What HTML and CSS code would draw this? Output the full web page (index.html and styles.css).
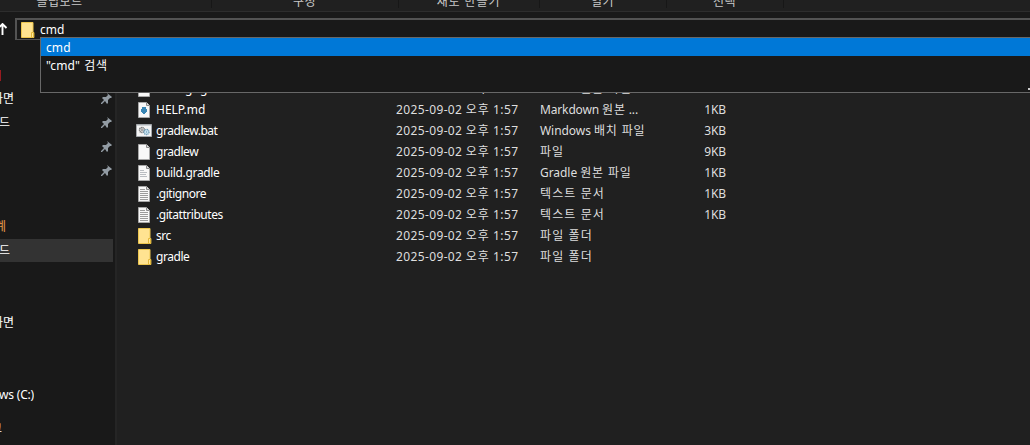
FILE: index.html
```html
<!DOCTYPE html>
<html lang="ko">
<head>
<meta charset="utf-8">
<title>Explorer</title>
<link rel="stylesheet" href="styles.css">
</head>
<body>
<svg class="defs" width="0" height="0">
  <symbol id="folder" viewBox="0 0 14 16"><path d="M.5.5h11.500v10h.9v5H.5z" fill="#ffe391" stroke="#edc64f"/><path d="M10.500 10.500h2v5h-2z" fill="#ffe79a" stroke="#e3b83a"/></symbol>
  <symbol id="pin" viewBox="0 0 11 12"><path d="M6 0l5 4-1 1-1 0-2 2 0 3-1 1-2-3-3 3-1 0 0-1 3-3-2-2 1-1h3l2-2z" fill="#929ba3"/></symbol>
  <symbol id="page" viewBox="0 0 12 16"><path d="M.5.5h8l3 3v12H.5z" fill="#f8f8f8" stroke="#a8a8a8"/><path d="M8.5.5v3h3" fill="#ddd" stroke="#8a8a8a"/></symbol>
  <symbol id="text" viewBox="0 0 12 16"><use href="#page" width="12" height="16"/><path d="M2 3.5h5M2 5.5h8M2 7.5h8M2 9.5h8M2 11.5h8M2 13.5h8" stroke="#9b9b9b"/></symbol>
  <symbol id="source" viewBox="0 0 12 16"><use href="#page" width="12" height="16"/><path d="M2 5.5h4M2 7.5h7M2 9.5h6M2 11.5h7" stroke="#b9bdc2"/></symbol>
  <symbol id="markdown" viewBox="0 0 12 16"><use href="#page" width="12" height="16"/><path d="M4 5h4v2h1v3H8v1H7v1H5v-1H4v-1H3V7h1z" fill="#3a87b5"/></symbol>
  <symbol id="batch" viewBox="0 0 16 13"><path d="M.5.5h15v12H.5z" fill="#f5f5f5" stroke="#a5a9ad"/><path d="M1 1.5h14" stroke="#cfd3d6"/><circle cx="6" cy="6" r="2.5" fill="#ddd" stroke="#777" stroke-width="1.4" stroke-dasharray="1.2 .5"/><circle cx="6" cy="6" r=".8" fill="#666"/><circle cx="10.5" cy="8" r="2.5" fill="#d4ebf6" stroke="#6f9db8" stroke-width="1.4" stroke-dasharray="1.2 .5"/><circle cx="10.5" cy="8" r=".8" fill="#6f9db8"/></symbol>
</svg>
<div class="window">
  <header class="ribbon">
    <div class="group first">클립보드</div><div class="group organize">구성</div><div class="group create">새로 만들기</div><div class="group open">열기</div><div class="group select">선택</div>
  </header>
  <div class="navbar">
    <svg class="up" width="8" height="13" viewBox="0 0 8 13"><path d="M2.500 12V1M-1.500 5l4-4 4 4" fill="none" stroke="#fff" stroke-width="1.9"/></svg>
    <div class="address"><div class="address-inner"><svg width="14" height="16"><use href="#folder"/></svg><span class="typed">cmd</span></div></div>
    <div class="suggestions">
      <div class="option active">cmd</div>
      <div class="option">"cmd" <span class="ko">검색</span></div>
      <i class="grip"></i>
    </div>
  </div>
  <div class="content">
    <nav class="sidebar">
      <div class="side-row access"><i class="red-mark"></i></div>
      <div class="side-row"><span class="label w14">바탕 화면</span><svg class="pin" width="11" height="12"><use href="#pin"/></svg></div>
      <div class="side-row"><span class="label w10">다운로드</span><svg class="pin" width="11" height="12"><use href="#pin"/></svg></div>
      <div class="side-row"><svg class="pin" width="11" height="12"><use href="#pin"/></svg></div>
      <div class="side-row"><svg class="pin" width="11" height="12"><use href="#pin"/></svg></div>
      <div class="side-row gap-a"><span class="label w6 orange">한계</span></div>
      <div class="side-row chosen"><span class="label w10">다운로드</span></div>
      <div class="side-row gap-b"><span class="label w14">바탕 화면</span></div>
      <div class="side-row gap-c"><span class="label w35">Windows (C:)</span></div>
      <div class="side-row gap-d"><span class="label w3">네트워크</span></div>
    </nav>
    <main class="files">
      <div class="file"><svg class="icon" width="12" height="16"><use href="#source"/></svg><span class="name">settings.gradle</span><span class="date">2025-09-02 <span class="ko">오후</span> 1:57</span><span class="type">Gradle <span class="ko">원본 파일</span></span><span class="size">1KB</span></div>
      <div class="file"><svg class="icon" width="12" height="16"><use href="#markdown"/></svg><span class="name help">HELP.md</span><span class="date">2025-09-02 <span class="ko">오후</span> 1:57</span><span class="type md">Markdown <span class="ko">원본</span> ...</span><span class="size">1KB</span></div>
      <div class="file"><svg class="icon wide" width="16" height="13"><use href="#batch"/></svg><span class="name">gradlew.bat</span><span class="date">2025-09-02 <span class="ko">오후</span> 1:57</span><span class="type">Windows <span class="ko">배치 파일</span></span><span class="size">3KB</span></div>
      <div class="file"><svg class="icon" width="12" height="16"><use href="#page"/></svg><span class="name">gradlew</span><span class="date">2025-09-02 <span class="ko">오후</span> 1:57</span><span class="type"><span class="ko">파일</span></span><span class="size">9KB</span></div>
      <div class="file"><svg class="icon" width="12" height="16"><use href="#source"/></svg><span class="name build">build.gradle</span><span class="date">2025-09-02 <span class="ko">오후</span> 1:57</span><span class="type">Gradle <span class="ko">원본 파일</span></span><span class="size">1KB</span></div>
      <div class="file"><svg class="icon" width="12" height="16"><use href="#text"/></svg><span class="name">.gitignore</span><span class="date">2025-09-02 <span class="ko">오후</span> 1:57</span><span class="type"><span class="ko doc">텍스트 문서</span></span><span class="size">1KB</span></div>
      <div class="file"><svg class="icon" width="12" height="16"><use href="#text"/></svg><span class="name">.gitattributes</span><span class="date">2025-09-02 <span class="ko">오후</span> 1:57</span><span class="type"><span class="ko doc">텍스트 문서</span></span><span class="size">1KB</span></div>
      <div class="file"><svg class="icon" width="14" height="16"><use href="#folder"/></svg><span class="name">src</span><span class="date">2025-09-02 <span class="ko">오후</span> 1:57</span><span class="type"><span class="ko doc">파일 폴더</span></span></div>
      <div class="file"><svg class="icon" width="14" height="16"><use href="#folder"/></svg><span class="name">gradle</span><span class="date">2025-09-02 <span class="ko">오후</span> 1:57</span><span class="type"><span class="ko doc">파일 폴더</span></span></div>
    </main>
  </div>
</div>
</body>
</html>
```
FILE: styles.css
```css
* { box-sizing: border-box; }
body { margin: 0; overflow: hidden; background: #202020; color: #fff; font: 12px/18px "Noto Sans", "Noto Sans CJK KR", sans-serif; }
.defs { position: absolute; }
.window { width: 1030px; height: 445px; overflow: hidden; display: flex; flex-direction: column; }
.ribbon { height: 12px; flex: none; display: flex; align-items: flex-end; background: #202020; border-bottom: 1px solid #2d2d2d; overflow: hidden; color: #c8c8c8; }
.group { height: 20px; flex: none; margin-bottom: 3px; border-right: 1px solid #171717; text-align: center; line-height: 27px; letter-spacing: .5px; padding-right: 1px; }
.first { width: 303px; margin-left: -91px; }
.organize { width: 187px; }
.create { width: 141px; letter-spacing: .9px; }
.open { width: 127px; }
.select { width: 117px; }
.navbar { position: relative; height: 28px; flex: none; display: flex; background: #191919; z-index: 2; }
.up { margin: 11px 7px 0 0; flex: none; }
.address { flex: 1; margin: 6px -3px 0 0; height: 22px; border: 1px solid #535353; }
.address-inner { height: 20px; border: 1px solid #535353; border-bottom: 0; display: flex; align-items: center; padding-left: 4px; gap: 5px; }
.typed { padding-top: 1px; }
.suggestions { position: absolute; left: 40px; top: 25px; width: 1000px; height: 56px; border: 1px solid #686868; background: #191919; }
.option { height: 18px; padding-left: 5px; line-height: 19px; letter-spacing: .1px; }
.option .ko { margin-left: 1px; }
.active { background: #0078d7; }
.grip { position: absolute; left: 987px; top: 50px; width: 2px; height: 2px; background: #ccc; }
.content { flex: 1; display: flex; min-height: 0; }
.sidebar { width: 117px; flex: none; background: #191919; border-right: 2px solid #252525; padding-top: 23px; }
.side-row { height: 24px; display: flex; align-items: center; }
.label { display: flex; justify-content: flex-end; overflow: hidden; white-space: nowrap; }
.w14 { width: 14px; }
.w10 { width: 10px; }
.w6 { width: 6px; }
.w35 { width: 34px; letter-spacing: -.2px; }
.w3 { width: 2px; }
.orange { color: #e89b4c; }
.pin { margin-left: auto; margin-right: 3px; }
.red-mark { width: 1px; height: 11px; background: #971b20; }
.gap-a { margin-top: 32px; }
.chosen { background: #333; width: 113px; height: 23px; }
.gap-b { margin-top: 49px; }
.gap-c { margin-top: 48px; }
.gap-d { margin-top: 10px; }
.files { flex: 1; padding: 38px 0 0 20px; }
.file { height: 21px; display: grid; grid-template-columns: 19px 240px 144px 130px 57px; align-items: center; white-space: nowrap; color: #dedede; }
.icon { margin-left: 1px; }
.icon.wide { margin-left: -1px; }
.name { color: #fff; letter-spacing: -.45px; }
.help { letter-spacing: 0; }
.build { letter-spacing: -.35px; }
.date { letter-spacing: .37px; }
.type { letter-spacing: -.05px; }
.md { letter-spacing: -.15px; }
.ko { letter-spacing: .85px; }
.doc { letter-spacing: 1.1px; }
.size { text-align: right; letter-spacing: -.1px; padding-right: 1px; }
```
